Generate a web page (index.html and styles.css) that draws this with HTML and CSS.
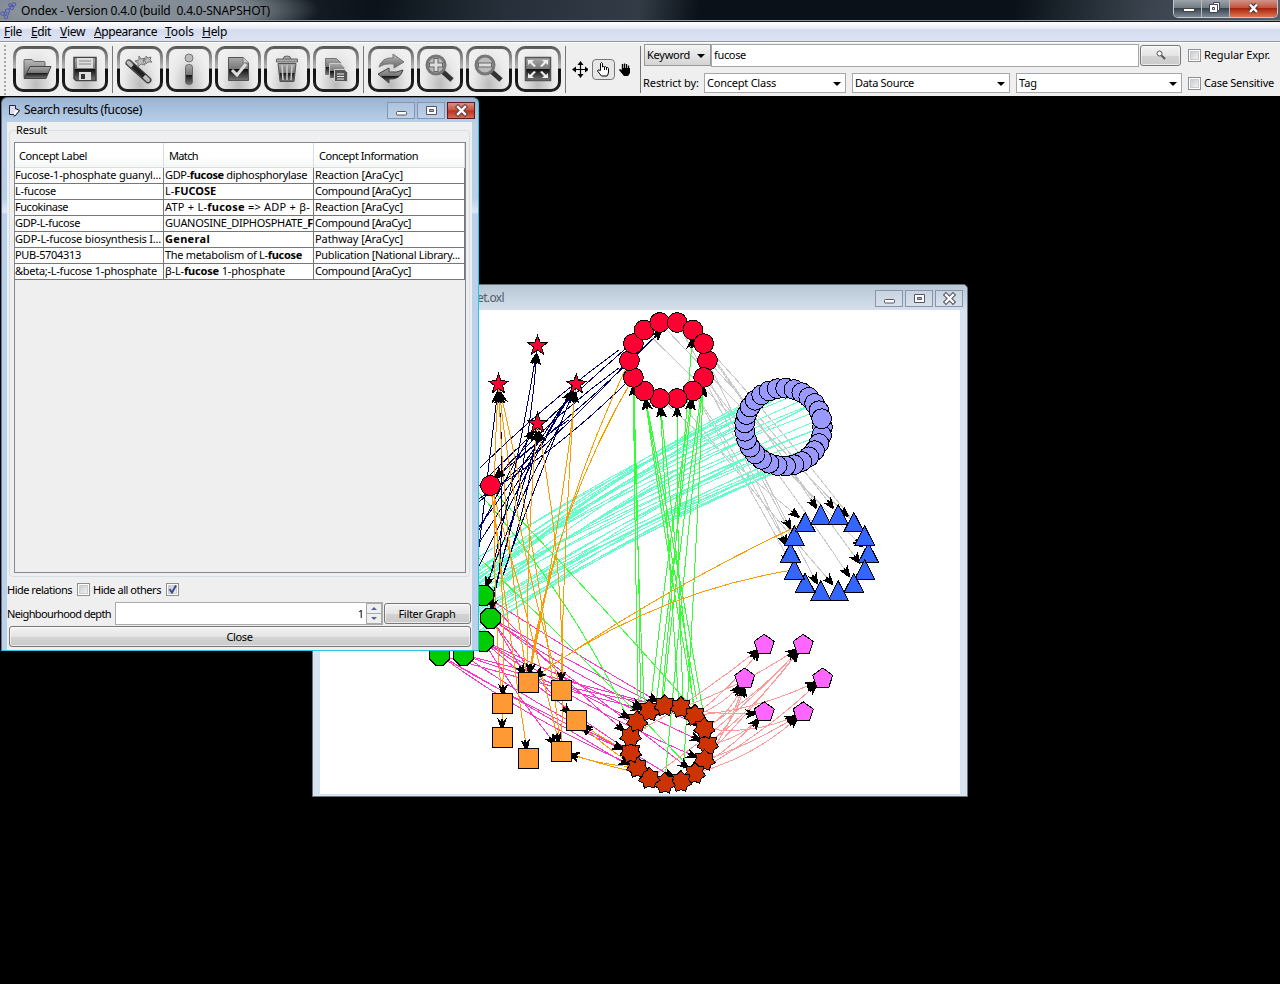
FILE: index.html
```
<!DOCTYPE html>
<html lang="en">
<head>
<meta charset="utf-8">
<title>Ondex</title>
<link rel="stylesheet" href="styles.css">
</head>
<body>
<svg width="0" height="0" class="defs">
  <defs>
    <linearGradient id="ig" x1="0" y1="0" x2="0" y2="1"><stop offset="0" stop-color="#aaa"/><stop offset=".5" stop-color="#777"/><stop offset=".52" stop-color="#111"/><stop offset="1" stop-color="#777"/></linearGradient>
    <linearGradient id="lg" x1="0" y1="0" x2="0" y2="1"><stop offset="0" stop-color="#bbb"/><stop offset="1" stop-color="#666"/></linearGradient>
  </defs>
</svg>
<header class="titlebar">
  <svg class="logo" width="18" height="20"><g fill="none" stroke="#5c63a8" stroke-width="1.2"><path d="M3 15L7 10L12 7L14 4M7 10L9 15M3 15H7"/></g><g fill="#7d84c4" stroke="#454b8f" stroke-width=".7"><circle cx="2.5" cy="13.500" r="1.800"/><circle cx="6" cy="17" r="1.800"/><circle cx="7.500" cy="11" r="2.200"/><circle cx="12" cy="8" r="1.800"/><circle cx="14" cy="4.500" r="1.800"/><circle cx="10" cy="5" r="1.500"/></g></svg>
  <span class="title" data-w="249">Ondex - Version 0.4.0 (build  0.4.0-SNAPSHOT)</span>
  <div class="winbtns">
    <span class="wb"><svg width="27" height="17"><rect x="9.500" y="8.500" width="11" height="3" fill="#fff" stroke="#444"/></svg></span>
    <span class="wb"><svg width="26" height="17"><path d="M11.500 2.500h6v8h-2v2h-8v-8h4z" fill="#fff" stroke="#445"/><path d="M11.500 4.500h4v6M10.500 7.500h2v2h-2z" fill="none" stroke="#445"/></svg></span>
    <span class="wb red"><svg width="47" height="17"><path d="M20 4.500L27 12M27 4.500L20 12" stroke="#433" stroke-width="4.500"/><path d="M20 4.500L27 12M27 4.500L20 12" stroke="#fff" stroke-width="2.500"/></svg></span>
  </div>
</header>
<nav class="menu">
  <span data-w="18"><u>F</u>ile</span><span data-w="20"><u>E</u>dit</span><span data-w="25"><u>V</u>iew</span><span data-w="63"><u>A</u>ppearance</span><span data-w="29"><u>T</u>ools</span><span data-w="25"><u>H</u>elp</span>
</nav>
<div class="toolbar">
  <div class="grip"></div>
  <div class="group g1">
    <span class="tb"><svg viewBox="0 0 46 46"><path d="M11 14.500q0-1 1-1h7l2 2h10q1 0 1 1v4H17l-5 11h-1z" fill="url(#lg)" stroke="#666"/><path d="M17 20.500h21l-5 12H11z" fill="url(#ig)" stroke="#444"/></svg></span>
    <span class="tb"><svg viewBox="0 0 46 46"><path d="M12 11.500h22v23H14l-2-2z" fill="url(#ig)" stroke="#444" stroke-width="1.500"/><path d="M15 12h16v10H15zM17 26h12v8H17z" fill="#ddd"/><path d="M17 15h12M17 18h12" stroke="#888"/><path d="M19 28h4v5h-4z" fill="#333"/></svg></span>
  </div>
  <div class="sep"></div>
  <div class="group g2">
    <span class="tb"><svg viewBox="0 0 46 46"><path d="M12 17L31 34" stroke="#444" stroke-width="7" stroke-linecap="round"/><path d="M11.500 16.500L14 19M28 31L31 34" stroke="#bbb" stroke-width="4" stroke-linecap="round"/><path d="M16 20L27 30" stroke="#222" stroke-width="4"/><path d="M22 10l2 3 4-1-2 3 2 4-4-1-3 3v-4l-3-2 4-1zM29 10l2 2 3-1-1 3 2 2-4 0-2 2-1-3-2-1 3-1z" fill="#bbb" stroke="#777"/></svg></span>
    <span class="tb"><svg viewBox="0 0 46 46"><circle cx="23" cy="12" r="4" fill="#bbb" stroke="#777"/><rect x="19.500" y="18.500" width="7" height="20" rx="3" fill="url(#ig)" stroke="#666"/></svg></span>
    <span class="tb"><svg viewBox="0 0 46 46"><path d="M13.500 11.500h15l5 5v18h-20z" fill="url(#ig)" stroke="#555"/><path d="M28 11v6h6" fill="#ccc" stroke="#777"/><path d="M17 24l5 5 9-11" fill="none" stroke="#ddd" stroke-width="3"/></svg></span>
    <span class="tb"><svg viewBox="0 0 46 46"><path d="M14 17.500h18l-2 18H16z" fill="url(#ig)" stroke="#555"/><path d="M18 19l1 15M23 19v15M28 19l-1 15" stroke="#ccc" stroke-width="1.500"/><path d="M12.500 13h21v3h-21zM19 13q0-3 4-3t4 3" fill="#aaa" stroke="#666"/></svg></span>
    <span class="tb"><svg viewBox="0 0 46 46"><g fill="url(#ig)"><path d="M12.500 12.500h11l4 4v12h-15z" stroke="#777"/><path d="M16.500 17.500h11l4 4v11h-15z" stroke="#ccc"/><path d="M21.500 23.500h10l3 3v9h-13z" fill="#555" stroke="#ccc"/></g><path d="M24 28h7M24 30.500h7M24 33h7" stroke="#eee"/></svg></span>
  </div>
  <div class="sep"></div>
  <div class="group g3">
    <span class="tb"><svg viewBox="0 0 46 46"><path d="M11 21q3-10 14-9V8l11 8-10 6v-4q-9-1-15 3z" fill="url(#lg)" stroke="#777"/><path d="M35 24q-3 10-14 9v4l-11-9 11-6v4q8 1 14-2z" fill="url(#ig)" stroke="#444"/></svg></span>
    <span class="tb"><svg viewBox="0 0 46 46"><path d="M25 25L35 34" stroke="#333" stroke-width="5"/><circle cx="19" cy="19" r="9" fill="#bbb" stroke="#777" stroke-width="3"/><path d="M19 12v14M12 19h14" stroke="#666" stroke-width="5"/><path d="M19 13v12M13 19h12" stroke="#ddd" stroke-width="3"/></svg></span>
    <span class="tb"><svg viewBox="0 0 46 46"><path d="M25 25L35 34" stroke="#333" stroke-width="5"/><circle cx="19" cy="19" r="9" fill="#bbb" stroke="#777" stroke-width="3"/><path d="M12 19h14" stroke="#666" stroke-width="5"/><path d="M13 19h12" stroke="#ddd" stroke-width="3"/></svg></span>
    <span class="tb"><svg viewBox="0 0 46 46"><path d="M10.500 11.500h25v23h-25z" fill="url(#ig)" stroke="#555" stroke-width="1.500"/><path d="M13 14h6l-2 2 4 4-2 1-4-4-2 2zM33 14h-6l2 2-4 4 2 1 4-4 2 2zM13 32h6l-2-2 4-4-2-1-4 4-2-2zM33 32h-6l2-2-4-4 2-1 4 4 2-2z" fill="#eee"/></svg></span>
  </div>
  <div class="sep"></div>
  <div class="group modes">
    <svg width="17" height="17"><path d="M8.500 2v13M2 8.500h13" stroke="#000" stroke-width="1.200"/><path d="M8.500 0l3 4h-6zM8.500 17l3-4h-6zM0 8.500l4-3v6zM17 8.500l-4-3v6z"/></svg>
    <span class="mode"><svg width="15" height="17"><path d="M4.500 9V2.500q1-2 2 0V6q1-1 2 0 1-1 2 .500 1.500-.500 2 1V11q0 2-1.500 4H5.500L1.500 10q0-2 3-.500zM8.500 6v3M10.500 6.500v2.500" fill="#fff" stroke="#000"/></svg></span>
    <svg width="13" height="15"><path d="M3.500 8V2M5.500 7V1.500M7.500 7V2M9.500 8V3.500" stroke="#000" stroke-width="1.300"/><path d="M3 6h8v5l-2 3H5L0 8l1-1 2 1z"/></svg>
  </div>
  <div class="sep"></div>
  <div class="search">
    <div class="row r1">
      <div class="kw"><span data-w="43">Keyword</span><i class="arr"></i></div>
      <div class="field"><span data-w="32">fucose</span></div>
      <div class="btn find"><svg width="10" height="11"><circle cx="3.500" cy="3.500" r="2.500" fill="#fff" stroke="#555"/><path d="M5.500 5.500L9 9" stroke="#555" stroke-width="2"/></svg></div>
      <i class="cb"></i><span data-w="66">Regular Expr.</span>
    </div>
    <div class="row r2">
      <span class="restrict" data-w="56">Restrict by:</span>
      <div class="combo c1"><span data-w="69">Concept Class</span><i class="arr"></i></div>
      <div class="combo c2"><span data-w="59">Data Source</span><i class="arr"></i></div>
      <div class="combo c3"><span data-w="18">Tag</span><i class="arr"></i></div>
      <i class="cb"></i><span data-w="70">Case Sensitive</span>
    </div>
  </div>
</div>
<main class="desktop">
  <section class="win graphwin">
    <div class="wtitle"><span class="gname" data-w="27">et.oxl</span>
      <div class="btns"><span><svg width="28" height="16"><rect x="8.500" y="8.500" width="10" height="3.500" rx="1" fill="#fff" stroke="#556"/></svg></span><span><svg width="28" height="16"><path d="M8.500 3.500h10v8h-10z" fill="#fff" stroke="#556"/><path d="M11.500 6.500h4v2h-4z" fill="#abc" stroke="#556"/></svg></span><span><svg width="28" height="16"><path d="M10 4l7 7M17 4l-7 7" stroke="#556" stroke-width="4.500" stroke-linecap="square"/><path d="M10 4l7 7M17 4l-7 7" stroke="#fff" stroke-width="2.300" stroke-linecap="square"/></svg></span></div>
    </div>
    <svg id="graph" width="640" height="484" viewBox="320.5 310.5 640 484"></svg>
  </section>
  <section class="win searchwin">
    <div class="wtitle">
      <svg width="13" height="13"><path d="M1.500 1.500h6v9h-6z" fill="#dde" stroke="#224"/><path d="M7.500 4.500l4 2-4 5-2 .500" fill="#fff" stroke="#000"/></svg>
      <span class="sname" data-w="118">Search results (fucose)</span>
      <div class="btns"><span><svg width="28" height="16"><rect x="8.500" y="8.500" width="10" height="3.500" rx="1" fill="#fff" stroke="#556"/></svg></span><span><svg width="28" height="16"><path d="M8.500 3.500h10v8h-10z" fill="#fff" stroke="#556"/><path d="M11.500 6.500h4v2h-4z" fill="#abc" stroke="#556"/></svg></span><span class="red"><svg width="28" height="16"><path d="M10 4l7 7M17 4l-7 7" stroke="#644" stroke-width="4.500" stroke-linecap="square"/><path d="M10 4l7 7M17 4l-7 7" stroke="#fff" stroke-width="2.300" stroke-linecap="square"/></svg></span></div>
    </div>
    <div class="body">
      <div class="result">
        <div class="legend"><span data-w="31">Result</span></div>
        <div class="table">
          <div class="tr th"><div><span data-w="68">Concept Label</span></div><div><span data-w="29">Match</span></div><div><span data-w="99">Concept Information</span></div></div>
          <div class="tr"><div><span data-w="146">Fucose-1-phosphate guanyl...</span></div><div><span data-w="142">GDP-<b>fucose</b> diphosphorylase</span></div><div><span data-w="88">Reaction [AraCyc]</span></div></div>
          <div class="tr"><div><span data-w="41">L-fucose</span></div><div><span data-w="51">L-<b>FUCOSE</b></span></div><div><span data-w="96">Compound [AraCyc]</span></div></div>
          <div class="tr"><div><span data-w="53">Fucokinase</span></div><div><span data-w="145">ATP + L-<b>fucose</b> =&gt; ADP + β-</span></div><div><span data-w="88">Reaction [AraCyc]</span></div></div>
          <div class="tr"><div><span data-w="65">GDP-L-fucose</span></div><div><span data-w="148">GUANOSINE_DIPHOSPHATE_<b>F</b></span></div><div><span data-w="96">Compound [AraCyc]</span></div></div>
          <div class="tr"><div><span data-w="146">GDP-L-fucose biosynthesis I...</span></div><div><span data-w="45"><b>General</b></span></div><div><span data-w="88">Pathway [AraCyc]</span></div></div>
          <div class="tr"><div><span data-w="66">PUB-5704313</span></div><div><span data-w="137">The metabolism of L-<b>fucose</b></span></div><div><span data-w="145">Publication [National Library...</span></div></div>
          <div class="tr"><div><span data-w="142">&amp;beta;-L-fucose 1-phosphate</span></div><div><span data-w="120">β-L-<b>fucose</b> 1-phosphate</span></div><div><span data-w="96">Compound [AraCyc]</span></div></div>
        </div>
      </div>
      <div class="opts"><span data-w="65">Hide relations</span><i class="cb"></i><span data-w="68">Hide all others</span><i class="cb"><svg width="9" height="9"><path d="M1.500 4l2.500 3.500L8 .5" fill="none" stroke="#3a4c96" stroke-width="2"/></svg></i></div>
      <div class="depth"><span data-w="104">Neighbourhood depth</span><div class="num"><span>1</span><div class="spin"><i><b class="up"></b></i><i><b class="dn"></b></i></div></div><div class="btn filter"><span data-w="57">Filter Graph</span></div></div>
      <div class="btn close"><span data-w="26">Close</span></div>
    </div>
  </section>
</main>
<script src="app.js"></script>
</body>
</html>
```
FILE: styles.css
```
* { box-sizing: border-box; }
body { margin: 0; width: 1280px; height: 984px; background: #000; font: 11px/14px "Noto Sans", "Open Sans", sans-serif; color: #000; overflow: hidden; display: flex; flex-direction: column; }
span { white-space: pre; }
svg { display: block; }
.defs { position: absolute; }
[data-w] { display: inline-block; flex: none; }
.titlebar { height: 22px; flex: none; display: flex; align-items: flex-start; background: radial-gradient(ellipse 190px 34px at 130px 10px, #8e979fdd 0 60%, transparent 100%), linear-gradient(100deg, #737c85 0, #5d666f 100px, #141b22 310px, #0b1219 370px, #27303a 500px, #333b46 630px, #0a1118 690px, #0a1118 1000px, #3a434d 1130px, #59636e 1280px); border-bottom: 1px solid #111; box-shadow: inset 0 -1px #9298a3; }
.title { margin-left: 3px; margin-top: 3px; font-size: 12px; line-height: 15px; }
.winbtns { margin-left: auto; margin-right: 2px; display: flex; height: 18px; border: 1px solid #c3c8cd; border-top: 0; border-radius: 0 0 5px 5px; overflow: hidden; }
.wb { width: 28px; border-right: 1px solid #bbb; background: linear-gradient(#9ca3aa, #727b84 45%, #39434e 50%, #7b8894); }
.wb.red { width: 47px; border: 0; background: linear-gradient(#d19488, #c25440 45%, #a9230d 50%, #df7550); }
.menu { height: 20px; flex: none; border-bottom: 1px solid #999; background: linear-gradient(#fff, #e8ecf7 35%, #d4dcee 40%, #dde3f3); display: flex; gap: 9px; padding: 3px 4px; font-size: 12px; line-height: 14px; }
.menu u { text-underline-offset: 1px; }
.menu span:nth-child(n+5) { margin-left: -1px; }
.toolbar { height: 54px; flex: none; background: #efefef; display: flex; padding-top: 3px; border-top: 1px solid #fff; }
.grip { width: 2px; height: 50px; margin: -1px 8px 0 4px; background: repeating-linear-gradient(#aaa 0 2px, transparent 2px 4px); }
.group { display: flex; gap: 3px; height: 46px; }
.g1 { margin-right: 4px; margin-left: -1px; }
.g2 { margin: 0 4px; }
.g3 { margin: 0 4px; }
.sep { width: 1px; height: 47px; background: #777; flex: none; }
.tb { width: 46px; height: 46px; border: 3px solid transparent; border-radius: 10px; background: radial-gradient(ellipse at 50% 90%, #bbb, #e8e8e8 55%, #efefef 75%) padding-box, linear-gradient(#555, #bbb 48%, #111 50%, #222) border-box; }
.tb svg { width: 46px; height: 46px; margin: -3px; }
.modes { align-items: center; gap: 4px; padding: 0 8px 0 6px; width: 74px; }
.mode { width: 23px; height: 21px; border: 1px solid #777; border-radius: 4px; background: #e6e6e6; padding: 1px 3px; }
.search { flex: 1; }
.row { display: flex; align-items: center; }
.r1 { height: 24px; margin-top: -3px; padding-left: 3px; }
.kw { width: 67px; height: 22px; border: 1px solid #999; background: linear-gradient(#f5f5f5, #d4d4d4); padding: 0 5px 0 2px; display: flex; align-items: center; justify-content: space-between; }
.arr { width: 0; border: 4px solid transparent; border-top-color: #000; border-bottom: 0; position: relative; top: 1px; }
.field { width: 428px; height: 23px; border: 1px solid #a5a7ab; background: #fff; padding: 3px 2px; }
.btn { border: 1px solid #777; border-radius: 3px; background: linear-gradient(#f3f3f3, #e4e4e4 50%, #d3d3d3 52%, #cacaca); box-shadow: inset 0 0 0 1px #fff9; display: flex; align-items: center; justify-content: center; }
.find { width: 41px; height: 21px; margin: 0 7px 0 1px; }
.cb { width: 13px; height: 13px; flex: none; border: 1px solid #8e8f8f; background: linear-gradient(135deg, #bfc4ca, #fafafa); box-shadow: inset 0 0 0 1px #fff, inset 0 0 0 2px #ccc; padding: 1px; margin-right: 3px; }
.r2 { margin-top: 6px; height: 20px; padding-left: 2px; }
.restrict { margin-right: 5px; }
.combo { height: 20px; border: 1px solid #a5a7ab; background: #fff; display: flex; align-items: center; justify-content: space-between; padding: 0 4px 0 2px; margin-right: 6px; }
.c1 { width: 142px; }
.c2 { width: 158px; }
.c3 { width: 166px; }
.desktop { position: relative; flex: 1; background: #000; }
.win { position: absolute; }
.graphwin { left: 312px; top: 188px; width: 656px; height: 513px; border: 1px solid #667078; border-radius: 5px 5px 0 0; background: #d7e3f0; padding: 0 7px 1px; }
.graphwin .wtitle { height: 25px; margin: 0 -7px; padding-top: 1px; background: linear-gradient(#b9c7d6, #d4e0ec); border-radius: 5px 5px 0 0; padding-left: 164px; color: #555c66; }
#graph { background: #fff; height: 484px; }
.wtitle { display: flex; align-items: center; }
.wtitle span { font-size: 12px; }
.btns { margin-left: auto; display: flex; gap: 2px; }
.btns span { width: 28px; height: 17px; border: 1px solid #8795ad; background: #ffffff24; }
.btns .red { background: linear-gradient(#dc9083, #c9503d 48%, #b9301c 52%, #d76b57); border-color: #5c1a1a; }
.graphwin .btns { margin-right: 4px; }
.searchwin { left: 1px; top: 1px; width: 478px; height: 554px; background: linear-gradient(#9ab4d3, #bad1e9 26px, #b8cfe8 100px, #dce8f5 114px, #b9d1ea 116px); border: 1px solid #607890; border-right: 1px solid #23c5e0; border-bottom: 1px solid #23c5e0; border-radius: 6px 6px 0 0; padding: 0 6px 0 5px; }
.searchwin .wtitle { height: 24px; gap: 3px; padding-left: 1px; }
.searchwin .btns { margin-right: -3px; }
.body { background: #efefef; height: 528px; padding: 8px 2px 0; }
.result { height: 447px; border: 1px solid #d5dfe5; border-radius: 4px; padding: 0 4px; }
.legend { margin: -8px 0 4px 2px; height: 15px; }
.legend span { background: #efefef; }
.table { width: 452px; height: 431px; border: 1px solid #828790; }
.tr { height: 16px; display: grid; grid-template-columns: 149px 150px 151px; line-height: 14px; background: #fff; }
.tr div { border-right: 1px solid #777; border-bottom: 1px solid #777; overflow: hidden; }
.tr div + div { padding-left: 1px; }
.tr.th { height: 25px; line-height: 25px; background: linear-gradient(#fff 50%, #f4f5f6); }
.tr.th div { border-color: #ddd; padding-left: 4px; }
.tr.th div + div { padding-left: 5px; }
.opts { display: flex; align-items: center; height: 13px; margin: 6px 0 0 -2px; }
.opts .cb { margin-left: 5px; }
.depth { display: flex; align-items: center; margin: 6px -1px 0 -2px; height: 23px; }
.num { margin-left: 4px; width: 268px; height: 23px; border: 1px solid #aaa; background: #fff; display: flex; align-items: center; justify-content: flex-end; gap: 2px; }
.spin { width: 16px; height: 21px; display: flex; flex-direction: column; background: #aaa; gap: 1px; padding: 1px; }
.spin i { flex: 1; background: #efefef; display: flex; align-items: center; justify-content: center; }
.up { border: 3px solid transparent; border-bottom-color: #5665a0; border-top: 0; }
.dn { border: 3px solid transparent; border-top-color: #5665a0; border-bottom: 0; }
.filter { width: 87px; height: 21px; margin-left: 1px; }
.filter span, .close span { margin-right: 1px; }
.close { height: 21px; margin: 1px -1px 0 0; }
```
FILE: app.js
```
// Set each label to its exact width by tracking.
document.querySelectorAll('[data-w]').forEach(function (e) {
  var w = e.getBoundingClientRect().width, n = e.textContent.length;
  e.style.letterSpacing = ((+e.dataset.w - w) / n) + 'px';
});

var out = [], heads = [], shapes = [];
function ring(cx, cy, n, start) {
  var a = [];
  for (var i = 0; i < n; i++) {
    var t = start + i * 2 * Math.PI / n;
    a.push([cx + 39 * Math.cos(t), cy + 39 * Math.sin(t)]);
  }
  return a;
}
var red = ring(669, 361, 14, 0), lilac = ring(784, 427.6, 29, 0), blue = ring(830, 553.3, 14, 0);
var pink = ring(784.2, 679, 6, 0), brown = ring(669.3, 744.9, 15, 0);
var squares = [[528.5, 682.5], [561.5, 690.5], [576.5, 720.5], [561.5, 751.5], [528.5, 758.5], [502.5, 737.5], [502.5, 703.5]];
var green = [[484, 595.5], [491, 618.5], [484, 641.5], [464, 655.5], [440, 655.5]];
var stars = [[538, 346.300], [499, 384.800], [576.800, 384.800], [538, 424]];

// Quadratic edge; bend is the sideways offset of the control point.
function edge(color, a, b, bend, arrow) {
  var dx = b[0] - a[0], dy = b[1] - a[1], l = Math.hypot(dx, dy) || 1;
  var c = [(a[0] + b[0]) / 2 + dy / l * bend, (a[1] + b[1]) / 2 - dx / l * bend];
  out.push('<path d="M' + a + 'Q' + c + ' ' + b + '" stroke="' + color + '"/>');
  if (arrow) {
    var t = Math.atan2(b[1] - c[1], b[0] - c[0]);
    heads.push('<path transform="translate(' + (b[0] - 9 * Math.cos(t)) + ' ' + (b[1] - 9 * Math.sin(t)) + ') rotate(' + t * 180 / Math.PI + ')" d="M1 -1L-10 -5L-7 -1H-9V1H-7L-10 5L1 1Z"/>');
  }
}
function poly(p, n, r, inner, fill) {
  var pts = [], m = inner ? n * 2 : n;
  for (var i = 0; i < m; i++) {
    var q = inner && i % 2 ? inner : r, t = -Math.PI / 2 + i * 2 * Math.PI / m + (n === 8 ? Math.PI / 8 : 0);
    pts.push((p[0] + q * Math.cos(t)).toFixed(1) + ',' + (p[1] + q * Math.sin(t)).toFixed(1));
  }
  shapes.push('<polygon points="' + pts.join(' ') + '" fill="' + fill + '"/>');
}
var i;
// grey
[[0, 8], [1, 7], [2, 7], [12, 1], [13, 10], [0, 11], [4, 9], [9, 0], [1, 2], [10, 12], [2, 6], [13, 13], [3, 3], [11, 4]].forEach(function (p, k) {
  edge('#c8c8c8', red[p[0]], blue[p[1]], k % 3 * 4 - 2, true);
});
// aqua
for (i = 0; i < 36; i++) {
  var target = lilac[i * 11 % 29];
  edge('#66ffcc', [476, 556 + (target[1] - 388) * .75 + (i * 7 % 9) * 3.2], target, 10 + i % 5 * 3, false);
}
// magenta
[[4, 6], [4, 7], [4, 10], [3, 13], [3, 12], [3, 7], [2, 9], [2, 0], [2, 1], [1, 10], [1, 14], [1, 2], [2, 3], [0, 8], [0, 11], [4, 5]].forEach(function (p, k) {
  edge('#ff33cc', green[p[0]], brown[p[1]], k % 4 * 5 - 13, k < 15);
});
edge('#ff33cc', green[1], squares[0], 2, true);
edge('#ff33cc', green[1], squares[2], -5, true);
edge('#ff33cc', green[2], squares[3], -5, true);
// bright green
[[641, 700, 6], [639, 722, 6], [646, 730, 8], [704, 714, 5], [697, 700, 5], [662, 715, 1], [655, 716, 2], [679, 700, 4], [684, 712, 3], [705, 720, 5], [666, 775, 1], [651, 704, 2], [684, 770, 1], [695, 716, 4], [698, 725, 5], [661, 715, 12]].forEach(function (p, k) {
  edge('#33ff33', [p[0], p[1]], red[p[2]], k % 3 * 3 - 2, true);
});
edge('#33ff33', [496, 494], [690, 705], 3, false);
edge('#33ff33', [480, 494], [636, 735], 22, false);
edge('#33ff33', [480, 559], [690, 768], 4, false);
// salmon
[[12, 4], [13, 3], [14, 3], [0, 3], [8, 2], [1, 3], [0, 4], [14, 5], [1, 5], [2, 0], [13, 0], [9, 1], [13, 2], [14, 1], [5, 1], [4, 4], [3, 1], [0, 1]].forEach(function (p, k) {
  edge('#ff9999', brown[p[0]], pink[[0, 5, 4, 3, 2, 1][p[1]]], -7 - k % 4 * 3, true);
});
edge('#ff9999', brown[2], pink[1], -16, true);
// navy
[[480, 469, 620, 350, 7], [468, 498, 633, 343, 4], [482, 488, 668, 325, -9], [470, 510, 630, 360, -9], [478, 500, 633, 377, -12]].forEach(function (p) {
  edge('#000066', [p[0], p[1]], [p[2], p[3]], p[4], p[2] === 668);
});
edge('#000066', [470, 540], stars[2], -4, true);
edge('#000066', [470, 558], stars[2], -3, true);
edge('#000066', [476, 574], stars[2], 4, true);
edge('#000066', [505, 570], stars[2], 2, true);
edge('#000066', [485, 600], stars[0], -6, true);
edge('#000066', [492, 600], stars[0], -14, true);
edge('#000066', [478, 560], stars[1], 0, true);
edge('#000066', [500, 570], stars[1], -6, true);
edge('#000066', [470, 550], stars[3], 3, true);
edge('#000066', [502, 580], stars[3], -10, true);
edge('#000066', [570, 420], [490, 485], -5, true);
edge('#000066', [620, 368], [490, 485], -9, true);
edge('#000066', [540, 434], [490, 618], -6, true);
edge('#000066', [558, 430], [484, 595], -9, true);
// orange
[[1, 0, 10], [1, 1, 15], [1, 3, -12], [1, 6, 12], [3, 0, 8], [3, 3, -20], [2, 0, -8]].forEach(function (p) { edge('#ff9900', squares[p[1]], stars[p[0]], p[2], true); });
edge('#ff9900', [491, 485], squares[6], 12, true);
edge('#ff9900', [491, 485], squares[4], -2, true);
edge('#ff9900', [491, 485], squares[3], 3, true);
edge('#ff9900', [575, 394], squares[1], -4, true);
edge('#ff9900', squares[6], squares[5], 0, true);
edge('#ff9900', red[7], squares[0], -24, true);
edge('#ff9900', red[6], squares[0], -32, true);
edge('#ff9900', blue[9], squares[0], -14, true);
edge('#ff9900', blue[6], squares[0], -35, true);
edge('#ff9900', brown[7], squares[2], 3, true);
edge('#ff9900', brown[4], squares[2], 8, true);
edge('#ff9900', brown[3], squares[3], 5, true);
edge('#ff9900', brown[6], squares[3], 6, true);

function circle(p, fill) { shapes.push('<circle cx="' + p[0] + '" cy="' + p[1] + '" r="9.9" fill="' + fill + '"/>'); }
red.forEach(function (p) { circle(p, '#ff0033'); });
circle([491, 486], '#ff0033');
lilac.forEach(function (p) { circle(p, '#9999ff'); });
blue.forEach(function (p) { shapes.push('<polygon points="' + p[0] + ',' + (p[1] - 10) + ' ' + (p[0] + 10) + ',' + (p[1] + 9.5) + ' ' + (p[0] - 10) + ',' + (p[1] + 9.5) + '" fill="#3366ff"/>'); });
pink.forEach(function (p) { poly(p, 5, 10.5, 0, '#ff66ff'); });
brown.forEach(function (p) { poly(p, 7, 11, 8, '#cc3300'); });
squares.forEach(function (p) { shapes.push('<rect x="' + (p[0] - 10) + '" y="' + (p[1] - 10) + '" width="20" height="20" fill="#ff9933"/>'); });
green.forEach(function (p) { poly(p, 8, 10.8, 0, '#00cc00'); });
stars.forEach(function (p) { poly(p, 5, 10.5, 4.2, '#ff0033'); });
document.getElementById('graph').innerHTML = '<g fill="none" stroke-width="1" shape-rendering="crispEdges">' + out.join('') + '</g><g shape-rendering="crispEdges">' + heads.join('') + '</g><g stroke="#000" shape-rendering="crispEdges">' + shapes.join('') + '</g>';
```
